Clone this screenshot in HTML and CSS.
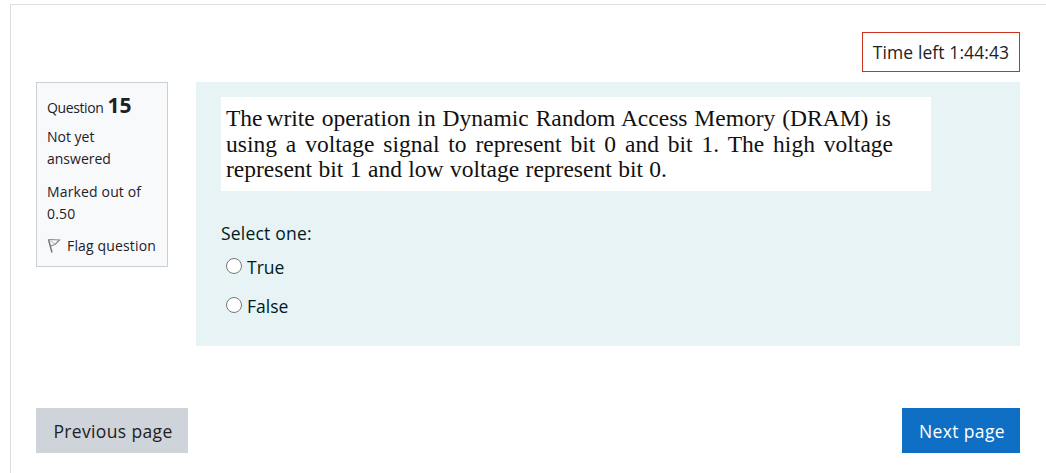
FILE: index.html
```html
<!DOCTYPE html>
<html lang="en">
<head>
  <meta charset="UTF-8" />
  <meta name="viewport" content="width=device-width, initial-scale=1.0"/>
  <title>Quiz - Question 15</title>
  <link rel="stylesheet" href="styles.css">
</head>

<body>
  <form class="quiz-page">
    <div class="timer-row">
      <div class="timer"><span>Time left 1:44:43</span></div>
    </div>

    <div class="question">
      <div class="info">
        <h3 class="number">Question <b>15</b></h3>
        <div class="state">Not yet answered</div>
        <div class="grade">Marked out of 0.50</div>
        <a class="flag">
          <svg width="14" height="16" viewBox="0 0 14 16" fill="none">
            <path d="M1.5 1.5L5 14.5" stroke="#777" stroke-width="1.5"/>
            <path d="M1.5 1.5L12.5 2L8 6.5L3.5 8" stroke="#8a8a8a" stroke-width="1.2"/>
            <path d="M3 2.5L8 6" stroke="#bbb" stroke-width="1"/>
          </svg>
          <span>Flag question</span>
        </a>
      </div>

      <div class="content">
        <div class="question-text">
          <p class="line line-1"><span class="tight">The </span>write operation in Dynamic Random Access Memory (DRAM) is</p>
          <p class="line line-2">using a voltage signal to represent bit 0 and bit 1. The high voltage</p>
          <p class="line line-3">represent bit 1 and low voltage represent bit 0.</p>
        </div>
        <div class="prompt">Select one:</div>
        <label class="answer"><input type="radio" name="answer" value="1"><span>True</span></label>
        <label class="answer"><input type="radio" name="answer" value="0"><span>False</span></label>
      </div>
    </div>

    <div class="nav-buttons">
      <button type="button" class="btn btn-secondary">Previous page</button>
      <button type="button" class="btn btn-primary">Next page</button>
    </div>
  </form>
</body>
</html>
```
FILE: styles.css
```css
* { box-sizing: border-box; }
body {
  margin: 0;
  padding: 4px 0 0 10px;
  height: 473px;
  overflow: hidden;
  background: #fff;
  color: #1d2125;
  font-family: "Open Sans", "Noto Sans", sans-serif;
  font-size: 17.5px;
}
.quiz-page {
  height: 469px;
  padding: 27px 26px 0 25px;
  border-top: 1px solid #dedede;
  border-left: 1px solid #dedede;
}
.timer-row { display: flex; justify-content: flex-end; }
.timer {
  width: 158px; height: 40px; line-height: 38px;
  border: 1px solid #ca3120; text-align: center;
  white-space: nowrap; letter-spacing: 0.1px;
}
.question {
  display: flex; justify-content: space-between; align-items: flex-start;
  margin-top: 10px;
}
.info {
  width: 132px; height: 185px; padding: 9px 0 0 10px;
  background: #f8f9fb; border: 1px solid #cad0d7;
  font-size: 14px; line-height: 22px;
}
.number { margin: 0; font-size: 14px; font-weight: 400; line-height: 26px; letter-spacing: -0.4px; }
.number b { margin-left: 1px; font-size: 21px; letter-spacing: 0; }
.state { width: 90px; margin-top: 5px; }
.grade { width: 100px; margin-top: 11px; letter-spacing: 0.15px; }
.flag { display: flex; align-items: center; gap: 6px; margin-top: 10px; white-space: nowrap; letter-spacing: 0.15px; }
.content {
  width: 824px; height: 264px; padding: 15px 25px;
  background: #e7f3f5; color: #001a1e;
}
.question-text {
  width: 710px; height: 94px; padding: 9px 0 0 5px;
  background: #fff; color: #111;
  font-family: "Liberation Serif", serif; font-size: 23.5px;
}
.line { margin: 0; line-height: 25.5px; white-space: nowrap; text-align-last: justify; }
.line-1 { width: 665px; }
.line-2 { width: 667px; }
.line-3 { width: 441px; }
.tight { word-spacing: -3px; }
.prompt { margin: 29px 0 7px; line-height: 26px; letter-spacing: 0.2px; }
.answer { display: flex; align-items: center; height: 27px; margin-bottom: 12px; padding-left: 5px; }
.answer input { width: 16px; height: 16px; margin: 0 5px 2px 0; }
.nav-buttons { display: flex; justify-content: space-between; margin-top: 62px; }
.btn {
  height: 45px; padding: 0 0 0 2px; border: 0;
  font-family: inherit; font-size: 17.5px; color: #1d2125; letter-spacing: 0.35px;
}
.btn-secondary { width: 152px; background: #ced4da; }
.btn-primary { width: 118px; background: #0f6fc5; color: #fff; }
```
